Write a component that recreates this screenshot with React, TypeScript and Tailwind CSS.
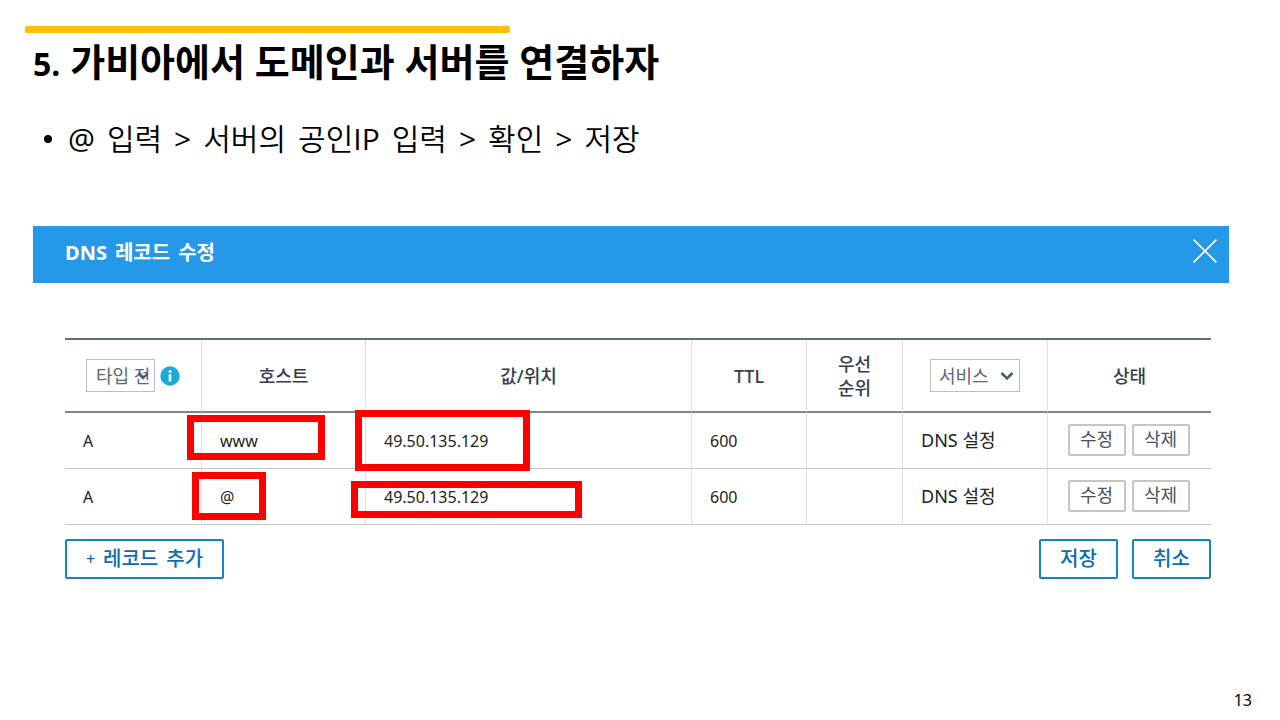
import type { ReactNode } from "react";
import { clsx } from "clsx";

type Step = { text: string; latin?: string };

type DnsRecord = {
  type: string;
  host: string;
  value: string;
  ttl: number;
  service: string;
  hostMark: string;
  valueMark: string;
};

const STEPS: Step[] = [
  { text: "", latin: "@" },
  { text: "입력" },
  { text: "", latin: ">" },
  { text: "서버의" },
  { text: "공인", latin: "IP" },
  { text: "입력" },
  { text: "", latin: ">" },
  { text: "확인" },
  { text: "", latin: ">" },
  { text: "저장" },
];

const RECORDS: DnsRecord[] = [
  {
    type: "A",
    host: "www",
    value: "49.50.135.129",
    ttl: 600,
    service: "DNS 설정",
    hostMark: "-left-[15px] top-[2px] w-[138px] h-[45px]",
    valueMark: "-left-[11px] -top-[3px] w-[175px] h-[61px]",
  },
  {
    type: "A",
    host: "@",
    value: "49.50.135.129",
    ttl: 600,
    service: "DNS 설정",
    hostMark: "-left-[10px] top-[3px] w-[74px] h-[48px]",
    valueMark: "-left-[15px] top-[12px] w-[231px] h-[37px]",
  },
];

const TH = "h-[73px] border-b-2 border-[#75879a] font-medium text-lg leading-6 text-[#333d4b] text-center align-middle";
const TD = "relative h-14 border-b border-[#c4c4c4] text-base text-[#222] align-middle";
const DIVIDER = "border-l border-l-[#e0e0e0]";

// Red frame drawn over a cell
function Mark({ className }: { className: string }) {
  return <span className={clsx("absolute z-10 border-[7px] border-[#fe0000] pointer-events-none", className)} />;
}

function Chevron({ className }: { className: string }) {
  return (
    <svg
      viewBox="0 0 14 10"
      className={clsx("absolute h-2.5 pointer-events-none", className)}
      fill="none"
      stroke="#4b5b6b"
      strokeWidth="2.6"
    >
      <path d="M1.5 2 7 7.5 12.5 2" />
    </svg>
  );
}

function SmallButton({ children }: { children: ReactNode }) {
  return (
    <button className="w-[58px] h-8 pb-0.5 border-2 border-[#c6c6c6] rounded-xs text-lg leading-6 text-[#48525e] flex items-center justify-center">
      {children}
    </button>
  );
}

function LargeButton({ children, className }: { children: ReactNode; className: string }) {
  return (
    <button
      className={clsx(
        "h-10 border-2 border-[#1482c8] rounded-xs text-xl leading-6 font-medium text-[#0b6cb3] flex items-center justify-center",
        className
      )}
    >
      {children}
    </button>
  );
}

function RecordTable() {
  return (
    <table className="w-full table-fixed border-separate border-spacing-0 border-t-2 border-[#5b7083]">
      <colgroup>
        <col className="w-[136px]" />
        <col className="w-[164px]" />
        <col />
        <col className="w-[115px]" />
        <col className="w-[96px]" />
        <col className="w-[145px]" />
        <col className="w-[164px]" />
      </colgroup>
      <thead>
        <tr>
          <th className={TH}>
            <div className="flex items-center gap-[5px] pl-[21px]">
              <div className="relative">
                <select
                  aria-label="타입"
                  className="block appearance-none w-[69px] h-[33px] border border-[#bdbdbd] pl-[9px] text-lg leading-6 font-normal text-[#5d6873] bg-white"
                >
                  <option>타입 전</option>
                </select>
                <Chevron className="w-3 right-1.5 top-3" />
              </div>
              <svg viewBox="0 0 20 20" className="w-5 h-5">
                <circle cx="10" cy="10" r="9.7" fill="#1ba9d8" />
                <circle cx="10" cy="5.6" r="1.5" fill="#fff" />
                <path d="M8.7 8.2h2.6v7.2H8.7z" fill="#fff" />
              </svg>
            </div>
          </th>
          <th className={clsx(TH, DIVIDER)}>호스트</th>
          <th className={clsx(TH, DIVIDER)}>값/위치</th>
          <th className={clsx(TH, DIVIDER)}>TTL</th>
          <th className={clsx(TH, DIVIDER)}>
            우선
            <br />
            순위
          </th>
          <th className={clsx(TH, DIVIDER)}>
            <div className="relative mx-auto w-[90px]">
              <select
                aria-label="서비스"
                className="block appearance-none w-full h-[33px] border border-[#bdbdbd] pl-2 text-lg leading-6 font-normal text-[#5d6873] bg-white"
              >
                <option>서비스</option>
              </select>
              <Chevron className="w-3.5 right-1.5 top-3" />
            </div>
          </th>
          <th className={clsx(TH, DIVIDER)}>상태</th>
        </tr>
      </thead>
      <tbody>
        {RECORDS.map((record) => (
          <tr key={record.host}>
            <td className={clsx(TD, "pl-[18px]")}>{record.type}</td>
            <td className={clsx(TD, DIVIDER, "pl-[18px]")}>
              {record.host}
              <Mark className={record.hostMark} />
            </td>
            <td className={clsx(TD, DIVIDER, "pl-[18px]")}>
              {record.value}
              <Mark className={record.valueMark} />
            </td>
            <td className={clsx(TD, DIVIDER, "pl-[18px]")}>{record.ttl}</td>
            <td className={clsx(TD, DIVIDER)} />
            <td className={clsx(TD, DIVIDER, "pl-[18px]")}>
              <span className="text-lg leading-6">{record.service}</span>
            </td>
            <td className={clsx(TD, DIVIDER, "pr-0.5 pb-0.5")}>
              <div className="flex justify-center gap-1.5">
                <SmallButton>수정</SmallButton>
                <SmallButton>삭제</SmallButton>
              </div>
            </td>
          </tr>
        ))}
      </tbody>
    </table>
  );
}

function RecordDialog() {
  return (
    <section className="mt-[67px] ml-[33px] mr-[51px]">
      <header className="h-[57px] bg-[#2598e8] flex items-center justify-between pl-8 pr-3">
        <h2 className="flex gap-2 pb-1 text-xl leading-6 font-bold text-white">
          <span>DNS</span>
          <span>레코드</span>
          <span>수정</span>
        </h2>
        <button aria-label="닫기" className="pb-2">
          <svg viewBox="0 0 24 24" className="w-6 h-6" stroke="#fff" strokeWidth="1.7">
            <path d="M.6.6l22.8 22.8M23.4.6.6 23.4" />
          </svg>
        </button>
      </header>
      <div className="pt-[55px] pl-8 pr-[18px]">
        <RecordTable />
        <div className="mt-3.5 flex gap-3.5">
          <LargeButton className="w-[159px] mr-auto gap-2">
            <span className="text-base">+</span>
            <span>레코드</span>
            <span>추가</span>
          </LargeButton>
          <LargeButton className="w-[79px]">저장</LargeButton>
          <LargeButton className="w-[79px]">취소</LargeButton>
        </div>
      </div>
    </section>
  );
}

export default function App() {
  return (
    <main className="min-h-screen bg-white text-black flex flex-col pt-[26px] font-['Noto_Sans','Noto_Sans_CJK_KR',sans-serif]">
      <div className="ml-[25px] w-[485px] h-[7px] rounded-xs bg-[#fdc00b]" />
      <h1 className="ml-[33px] mt-0.5 text-[38px] leading-[52px] font-bold">
        <span className="text-[32px]">5.</span> 가비아에서 도메인과 서버를 연결하자
      </h1>
      <ul className="mt-[29px] ml-[44px]">
        <li className="flex items-center text-[30px] leading-10 font-[350] font-['Open_Sans','Noto_Sans_CJK_KR',sans-serif]">
          <span className="w-2 h-2 mr-4 rounded-full bg-black" />
          <span className="flex gap-3">
            {STEPS.map((step, i) => (
              <span key={i}>
                {step.text}
                {step.latin && <span className="font-normal">{step.latin}</span>}
              </span>
            ))}
          </span>
        </li>
      </ul>
      <RecordDialog />
      <footer className="mt-auto pr-7 pb-2 text-right text-base leading-6">13</footer>
    </main>
  );
}
